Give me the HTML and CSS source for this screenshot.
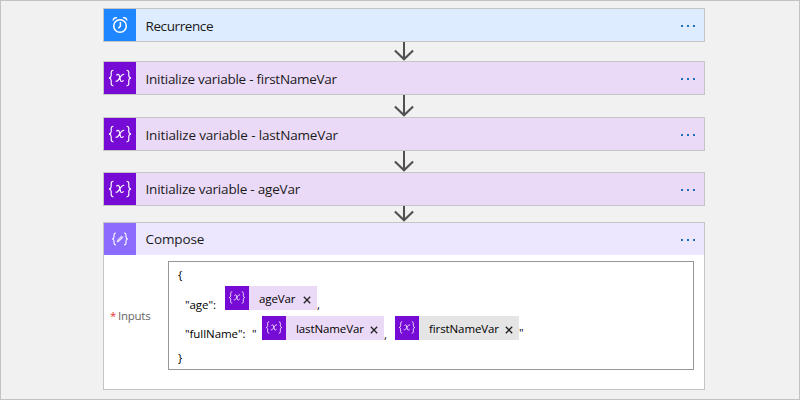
FILE: index.html
```html
<!DOCTYPE html>
<html lang="en">
<head>
<meta charset="utf-8">
<title>Workflow designer</title>
<link rel="stylesheet" href="styles.css">
</head>
<body>
<svg width="0" height="0" class="defs">
  <defs>
    <symbol id="braces" viewBox="0 0 24 18">
      <path d="M5.4 1.2C3.6 1.2 3.2 1.8 3.2 3.4V6.4C3.2 8 2.6 8.7 1 9C2.6 9.3 3.2 10 3.2 11.6V14.6C3.2 16.2 3.6 16.8 5.4 16.8M18.6 1.2C20.4 1.2 20.8 1.8 20.8 3.4V6.4C20.8 8 21.4 8.7 23 9C21.4 9.3 20.8 10 20.8 11.6V14.6C20.8 16.2 20.4 16.8 18.6 16.8"/>
      <path d="M8.4 6.4C9.8 4.8 11 5.2 11.4 7L12.4 11C12.8 12.9 14 13 15.6 11.3M16.2 5.6C14.6 4.7 13.2 6.4 11.9 8.6C10.5 11 9.3 13 7.6 12.1"/>
    </symbol>
    <symbol id="arrow" viewBox="0 0 20 12">
      <path d="M10 0V10M.9 1.5L10 10.3L19.1 1.5"/>
    </symbol>
  </defs>
</svg>
<main class="flow">
  <section class="card recurrence">
    <span class="icon"><svg width="16" height="18" viewBox="0 0 16 18"><circle cx="8" cy="10" r="6.3"/><path d="M8.4 6V10.2L6.4 12.2M1.2 4.5C1.3 2.5 3 1.3 5 1.8M14.8 4.5C14.7 2.5 13 1.3 11 1.8"/></svg></span>
    <span class="title t1">Recurrence</span><span class="more"><i></i><i></i><i></i></span>
  </section>
  <div class="link l1"><svg width="20" height="12"><use href="#arrow"/></svg></div>
  <section class="card variable">
    <span class="icon"><svg width="24" height="18"><use href="#braces"/></svg></span>
    <span class="title t2">Initialize variable - firstNameVar</span><span class="more"><i></i><i></i><i></i></span>
  </section>
  <div class="link l2"><svg width="20" height="12"><use href="#arrow"/></svg></div>
  <section class="card variable">
    <span class="icon"><svg width="24" height="18"><use href="#braces"/></svg></span>
    <span class="title t3">Initialize variable - lastNameVar</span><span class="more"><i></i><i></i><i></i></span>
  </section>
  <div class="link l3"><svg width="20" height="12"><use href="#arrow"/></svg></div>
  <section class="card variable">
    <span class="icon"><svg width="24" height="18"><use href="#braces"/></svg></span>
    <span class="title t4">Initialize variable - ageVar</span><span class="more"><i></i><i></i><i></i></span>
  </section>
  <div class="link l4"><svg width="20" height="12"><use href="#arrow"/></svg></div>
  <section class="compose">
    <header class="head">
      <span class="icon"><svg width="18" height="14" viewBox="0 0 18 14"><path d="M5 1C3.4 1 3 1.5 3 2.7V5C3 6.2 2.5 6.8 1.2 7C2.5 7.2 3 7.8 3 9V11.3C3 12.5 3.4 13 5 13M13 1C14.6 1 15 1.5 15 2.7V5C15 6.2 15.5 6.8 16.8 7C15.5 7.2 15 7.8 15 9V11.3C15 12.5 14.6 13 13 13"/><path class="pen" d="M6 10L6.6 8L10.6 4L12 5.4L8 9.4Z"/></svg></span>
      <span class="title t5">Compose</span><span class="more"><i></i><i></i><i></i></span>
    </header>
    <div class="body">
      <label class="label"><b>*</b><span>Inputs</span></label>
      <div class="editor">
        <div class="row first">{</div>
        <div class="row age"><span class="key k1">"age":</span><span class="chip c1"><span class="token"><svg width="18" height="13"><use href="#braces"/></svg></span><span class="name">ageVar</span><svg class="close" width="8" height="8" viewBox="0 0 8 8"><path d="M.8 .8L7.2 7.2M7.2 .8L.8 7.2"/></svg></span><span class="comma">,</span></div>
        <div class="row full"><span class="key k2">"fullName":</span><span class="quote">"</span><span class="chip c2"><span class="token"><svg width="18" height="13"><use href="#braces"/></svg></span><span class="name">lastNameVar</span><svg class="close" width="8" height="8" viewBox="0 0 8 8"><path d="M.8 .8L7.2 7.2M7.2 .8L.8 7.2"/></svg></span><span class="comma">,</span><span class="chip c3"><span class="token"><svg width="18" height="13"><use href="#braces"/></svg></span><span class="name">firstNameVar</span><svg class="close" width="8" height="8" viewBox="0 0 8 8"><path d="M.8 .8L7.2 7.2M7.2 .8L.8 7.2"/></svg></span><span class="end">"</span></div>
        <div class="row last">}</div>
      </div>
    </div>
  </section>
</main>
</body>
</html>
```
FILE: styles.css
```css
* { box-sizing: border-box; }
body { margin: 0; font-family: "Open Sans", "Noto Sans", sans-serif; color: #1a1a1a; }
.defs { display: none; }
svg { fill: none; stroke: #fff; display: block; flex: none; }
.flow { width: 800px; height: 400px; padding: 7px 94px 0 102px; background: #f1f1f1; border: 1px solid #c3c3c3; overflow: hidden; }
.card { display: flex; height: 34px; border: 1px solid #c5c5c5; }
.icon { width: 32px; height: 32px; display: flex; align-items: center; justify-content: center; flex: none; }
.recurrence { background: #deecff; }
.recurrence .icon { background: #1e86ff; }
.recurrence svg { stroke-width: 1.5; }
.variable { background: #ebdaf7; }
.variable .icon, .token { background: #770bd6; }
.variable .icon svg { stroke-width: 1.15; }
.title { margin-left: 9.5px; font-size: 13.5px; letter-spacing: -.26px; line-height: 34px; white-space: nowrap; flex: 1; }
.t1 { letter-spacing: -.4px; }
.t3 { letter-spacing: -.16px; }
.t4, .t5 { line-height: 32px; }
.t4 { letter-spacing: -.2px; }
.t5 { letter-spacing: -.1px; }
.more { display: flex; gap: 4px; margin: 16px 9px 0 0; }
.more i { width: 2px; height: 2px; background: #1f6fc0; }
.link { display: flex; justify-content: center; align-items: flex-end; background: linear-gradient(#505050, #505050) 300px 0 / 2px 90% no-repeat; }
.link svg { stroke: #505050; stroke-width: 2.1; }
.l1 { height: 19px; }
.l2 { height: 22px; }
.l3 { height: 21px; }
.l4 { height: 16px; }
.compose { height: 168px; border: 1px solid #c5c5c5; background: #fff; }
.head { height: 32px; display: flex; background: #ece7ff; }
.head .icon { background: #8c6cff; }
.head .icon svg { stroke-width: 1.1; }
.pen { fill: #d9ceff; stroke-width: .6; }
.body { display: flex; padding: 6px 10px 0 6px; }
.label { width: 58px; display: flex; padding-top: 46px; font-size: 11.5px; letter-spacing: -.25px; line-height: 18px; color: #666; }
.label b { color: #e33; font-weight: 400; width: 8px; }
.editor { width: 526px; height: 109px; border: 1px solid #979797; padding: 0 9px; font-size: 11.5px; letter-spacing: -.05px; color: #000; white-space: nowrap; }
.row { display: flex; line-height: 18px; }
.first { height: 24px; padding-top: 4px; }
.age, .full { height: 30px; padding-left: 7px; }
.key, .quote { padding-top: 10px; flex: none; }
.full .key, .full .quote { padding-top: 9px; }
.k1 { width: 40px; }
.k2 { width: 67px; }
.quote { width: 10px; }
.chip { display: flex; height: 24px; background: #ebdaf7; flex: none; }
.c1 { width: 92px; }
.c2 { width: 122px; }
.c3 { width: 124px; background: #e5e5e5; }
.token { width: 24px; height: 24px; padding: 5px 3px; }
.token svg { stroke-width: 1.15; }
.name { padding-left: 10px; line-height: 26px; flex: 1; letter-spacing: -.1px; }
.close { margin: 10px 6px 0 0; stroke: #222; stroke-width: 1.3; }
.comma { padding-top: 10px; width: 11px; }
.end { padding-top: 8px; }
.last { padding-top: 3px; }
```
